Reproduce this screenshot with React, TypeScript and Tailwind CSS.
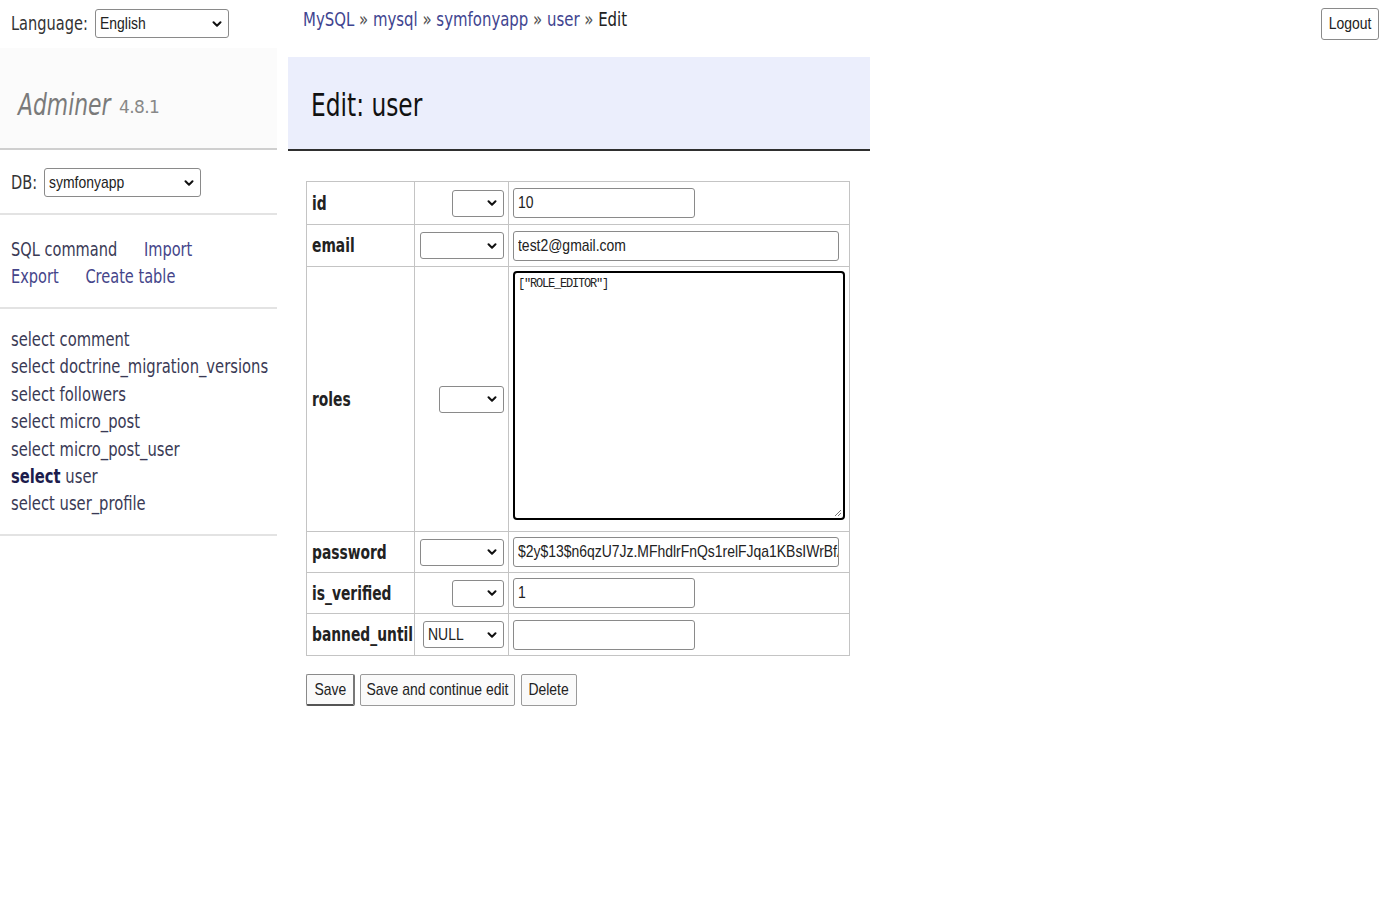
import React from 'react';
import { ChevronDown } from 'lucide-react';

const cond = "font-['DejaVu_Sans_Condensed','DejaVu_Sans',sans-serif]";
const ctrl = "font-['Liberation_Sans',Arial,sans-serif] text-[17px]";

const tables = ['comment', 'doctrine_migration_versions', 'followers', 'micro_post', 'micro_post_user', 'user', 'user_profile'];

// narrow glyphs for form controls, like the reference's squeezed Arial
const Narrow = ({ children, center }: { children: React.ReactNode; center?: boolean }) => (
  <span className={`inline-block whitespace-nowrap scale-x-[0.82] ${center ? 'origin-center' : 'origin-left'}`}>{children}</span>
);

// squeezed Verdana-like page text
const Sq = ({ children, className = '' }: { children: React.ReactNode; className?: string }) => (
  <span className={`inline-block whitespace-nowrap scale-x-[0.81] origin-left ${className}`}>{children}</span>
);

const FakeSelect = ({ width, value, className = '' }: { width: number; value?: string; className?: string }) => (
  <div
    className={`flex items-center justify-between h-[27px] border border-[#8a8a8a] rounded-[3px] bg-white pl-[4px] pr-[4px] ${ctrl} text-[#222] overflow-hidden ${className}`}
    style={{ width }}
  >
    <span className="flex-1 min-w-0">{value && <Narrow>{value}</Narrow>}</span>
    <ChevronDown size={14} strokeWidth={3.5} className="text-[#111] shrink-0" />
  </div>
);

const FakeInput = ({ width, value }: { width: number; value?: string }) => (
  <div
    className={`h-[30px] border border-[#8a8a8a] rounded-[3px] bg-white px-[4px] flex items-center ${ctrl} text-[#222] overflow-hidden`}
    style={{ width }}
  >
    {value && <Narrow>{value}</Narrow>}
  </div>
);

const rows = [
  { name: 'id', sel: 52, input: 182, value: '10', h: 42 },
  { name: 'email', sel: 84, input: 326, value: 'test2@gmail.com', h: 42 },
  { name: 'roles', sel: 65, input: 0, value: '', h: 265 },
  { name: 'password', sel: 84, input: 326, value: '$2y$13$n6qzU7Jz.MFhdlrFnQs1relFJqa1KBsIWrBfA', h: 41 },
  { name: 'is_verified', sel: 52, input: 182, value: '1', h: 41 },
  { name: 'banned_until', sel: 81, input: 182, value: '', h: 42, selValue: 'NULL' },
];

export default function App() {
  return (
    <div className={`relative w-[1400px] h-[900px] bg-white flex ${cond} text-[20px] text-black overflow-hidden`}>
      {/* sidebar */}
      <div className="w-[277px] flex flex-col">
        <div className="h-[48px] pt-[9px] pl-[11px] flex items-start gap-[7px]">
          <span className="w-[77px] leading-[29px] text-[#333]">
            <Sq>Language:</Sq>
          </span>
          <FakeSelect width={134} value="English" className="h-[29px]" />
        </div>
        <div className="h-[102px] bg-[#fbfbfb] border-b-2 border-[#cfcfcf] pl-[18px] pt-[12px] flex items-center">
          <span className="w-[101px]">
            <Sq className="italic text-[30px] text-[#7a7a7a]">Adminer</Sq>
          </span>
          <span className="text-[17px] tracking-[-0.6px] text-[#888] mt-[7px] font-['DejaVu_Sans',sans-serif]">4.8.1</span>
        </div>
        <div className="pt-[18px] pb-[16px] pl-[11px] flex items-center gap-[6px] border-b-2 border-[#e3e3e3]">
          <span className="w-[27px] leading-[29px] text-[#333]">
            <Sq>DB:</Sq>
          </span>
          <FakeSelect width={157} value="symfonyapp" className="h-[29px]" />
        </div>
        <div className="pt-[21px] pb-[17px] pl-[11px] leading-[27px] border-b-2 border-[#e3e3e3]">
          <div>
            <Sq>
              <span className="text-[#3a3a55]">SQL command</span>
              <span className="text-[#45458a] ml-[33px]">Import</span>
            </Sq>
          </div>
          <div>
            <Sq>
              <span className="text-[#45458a]">Export</span>
              <span className="text-[#45458a] ml-[33px]">Create table</span>
            </Sq>
          </div>
        </div>
        <div className="pt-[17px] pb-[16px] pl-[11px] leading-[27.4px] border-b-2 border-[#e3e3e3]">
          {tables.map((t) => (
            <div key={t} className="text-[#3a3a55]">
              <Sq className="scale-x-[0.82]">
                {t === 'user' ? <span className="font-bold text-[#1c1c4c]">select</span> : <span>select</span>}{' '}
                <span>{t}</span>
              </Sq>
            </div>
          ))}
        </div>
      </div>

      {/* main */}
      <div className="ml-[11px] flex flex-col">
        <div className="h-[57px] pl-[15px] pt-[4px] text-[#222]">
          <Sq className="scale-x-[0.83]">
            <span className="text-[#3f4590]">MySQL</span> <span className="text-[#555]">»</span>{' '}
            <span className="text-[#3f4590]">mysql</span> <span className="text-[#555]">»</span>{' '}
            <span className="text-[#3f4590]">symfonyapp</span> <span className="text-[#555]">»</span>{' '}
            <span className="text-[#3f4590]">user</span> <span className="text-[#555]">»</span> Edit
          </Sq>
        </div>
        <div className="w-[582px] h-[94px] bg-[#ebeefc] border-b-2 border-[#2f2f2f] pl-[23px] pt-[4px] flex items-center">
          <Sq className="scale-x-[0.8] text-[32px] text-[#111]">Edit: user</Sq>
        </div>

        <div className="ml-[18px] mt-[30px] w-[544px] border border-[#c4c4c4]">
          {rows.map((r, i) => (
            <div key={r.name} className={`flex ${i > 0 ? 'border-t border-[#c4c4c4]' : ''}`} style={{ height: r.h }}>
              <div className="w-[108px] border-r border-[#c4c4c4] pl-[5px] flex items-center text-[#222] overflow-visible">
                <Sq className="font-bold text-[19px] scale-x-[0.8]">{r.name}</Sq>
              </div>
              <div className="w-[94px] border-r border-[#c4c4c4] pr-[4px] flex items-center justify-end">
                <FakeSelect width={r.sel} value={r.selValue} />
              </div>
              {r.name === 'roles' ? (
                <div className="flex-1 pl-[4px] pt-[4px]">
                  <div className="relative w-[332px] h-[249px] border-2 border-black rounded-[4px] bg-white px-[3px] pt-[2px] font-['Liberation_Mono',monospace] text-[12px] tracking-[-1.2px] text-[#222]">
                    ["ROLE_EDITOR"]
                    <svg className="absolute right-[1px] bottom-[1px]" width="9" height="9" viewBox="0 0 9 9">
                      <path d="M8 2 L2 8 M8 5 L5 8" stroke="#777" strokeWidth="1" />
                    </svg>
                  </div>
                </div>
              ) : (
                <div className="flex-1 pl-[4px] flex items-center">
                  <FakeInput width={r.input} value={r.value} />
                </div>
              )}
            </div>
          ))}
        </div>

        <div className={`ml-[18px] mt-[18px] flex gap-[5px] ${ctrl} text-[#222]`}>
          <button className="h-[32px] w-[49px] flex items-center justify-center border border-[#8a8a8a] border-b-2 border-r-2 border-b-[#555] border-r-[#777] rounded-[2px] bg-[#fafafa]">
            <Narrow center>Save</Narrow>
          </button>
          <button className="h-[32px] w-[155px] flex items-center justify-center border border-[#9a9a9a] rounded-[2px] bg-[#fafafa]">
            <Narrow center>Save and continue edit</Narrow>
          </button>
          <button className="h-[32px] w-[56px] ml-[1px] flex items-center justify-center border border-[#9a9a9a] rounded-[2px] bg-[#fafafa]">
            <Narrow center>Delete</Narrow>
          </button>
        </div>
      </div>

      <button className={`absolute right-[21px] top-[8px] h-[32px] w-[58px] flex items-center justify-center border border-[#8a8a8a] rounded-[3px] bg-white ${ctrl} text-[#222]`}>
        <Narrow center>Logout</Narrow>
      </button>
    </div>
  );
}
